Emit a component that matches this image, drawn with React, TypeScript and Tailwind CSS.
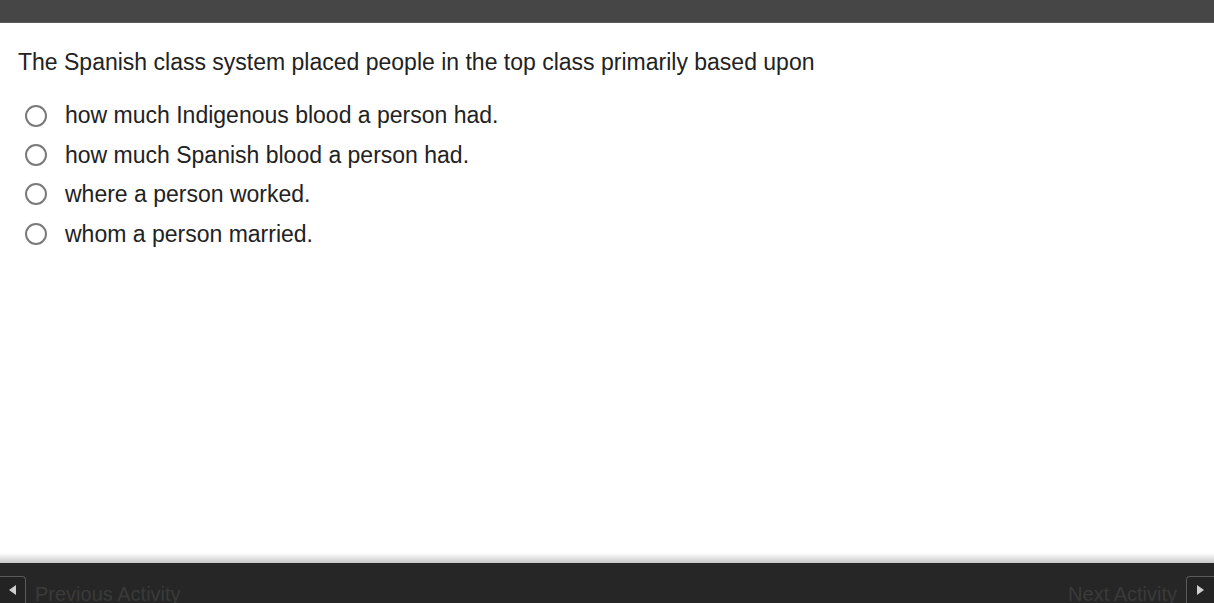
import React from 'react';

const options = [
  'how much Indigenous blood a person had.',
  'how much Spanish blood a person had.',
  'where a person worked.',
  'whom a person married.',
];

export default function App() {
  return (
    <div className="w-[1214px] h-[603px] flex flex-col bg-white overflow-hidden" style={{ fontFamily: '"Liberation Sans", Arial, sans-serif' }}>
      {/* top bar */}
      <div className="h-[23px] shrink-0 bg-[#464646] border-b border-[#5a5a5a]" />

      {/* question */}
      <div className="flex-1 px-[18px] pt-[23px]">
        <p className="text-[23px] leading-[32px] text-[#222]">
          The Spanish class system placed people in the top class primarily based upon
        </p>
        <ul className="mt-[18px] flex flex-col">
          {options.map((o) => (
            <li key={o} className="flex items-center h-[39.4px]">
              <span className="ml-[7px] w-[22px] h-[22px] rounded-full border-2 border-[#7a7a7a] shrink-0" />
              <span className="ml-[18px] text-[23px] text-[#222]">{o}</span>
            </li>
          ))}
        </ul>
      </div>

      {/* bottom bar */}
      <div className="h-[10px] shrink-0 bg-gradient-to-b from-white to-[#c8c8c8]" />
      <div className="h-[40px] shrink-0 bg-[#262626] flex items-end justify-between">
        <div className="flex items-end">
          <div className="w-[27px] h-[27px] -ml-[1px] rounded-tr-[4px] border border-[#5a5a5a] border-b-0 bg-[#232323] flex items-center justify-center">
            <span className="w-0 h-0 border-y-[5px] border-y-transparent border-r-[7px] border-r-[#cfcfcf]" />
          </div>
          <span className="ml-[9px] text-[20px] leading-[18px] text-[#3a3a3a]">Previous Activity</span>
        </div>
        <div className="flex items-end">
          <span className="mr-[9px] text-[20px] leading-[18px] text-[#3a3a3a]">Next Activity</span>
          <div className="w-[28px] h-[27px] rounded-tl-[4px] border border-[#5a5a5a] border-b-0 border-r-0 bg-[#232323] flex items-center justify-center">
            <span className="w-0 h-0 border-y-[5px] border-y-transparent border-l-[7px] border-l-[#cfcfcf]" />
          </div>
        </div>
      </div>
    </div>
  );
}
